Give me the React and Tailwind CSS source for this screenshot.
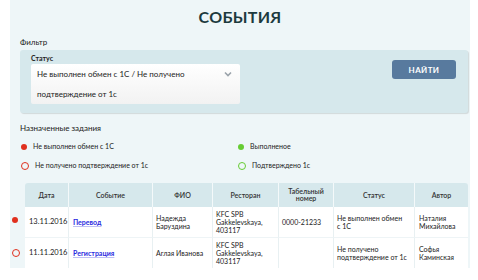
import React from "react";

const cols = "grid-cols-[15px_43px_84px_60px_66px_55px_81px_54px]";

const rows = [
  {
    dot: "fill",
    date: "13.11.2016",
    event: "Перевод",
    fio: ["Надежда", "Баруздина"],
    rest: ["KFC SPB", "Gakkelevskaya,", "403117"],
    num: "0000-21233",
    status: ["Не выполнен обмен", "с 1С"],
    author: ["Наталия", "Михайлова"],
  },
  {
    dot: "ring",
    date: "11.11.2016",
    event: "Регистрация",
    fio: ["Аглая Иванова"],
    rest: ["KFC SPB", "Gakkelevskaya,", "403117"],
    num: "",
    status: ["Не получено", "подтверждение от 1с"],
    author: ["Софья", "Каминская"],
  },
];

function Dot({ kind, color }) {
  if (kind === "fill") {
    return <span className={`block w-[6px] h-[6px] rounded-full ${color === "red" ? "bg-[#e0301e]" : "bg-[#66cc33]"}`} />;
  }
  return (
    <span
      className={`block w-[8px] h-[8px] rounded-full border-[1.5px] ${color === "red" ? "border-[#e0301e]" : "border-[#66cc33]"}`}
    />
  );
}

function Lines({ items }) {
  return (
    <div className="leading-[8px]">
      {items.map((t) => (
        <div key={t}>{t}</div>
      ))}
    </div>
  );
}

export default function App() {
  return (
    <div className="w-[478px] h-[280px] bg-white overflow-hidden" style={{ fontFamily: "Lato, 'Open Sans', sans-serif" }}>
      <div className="ml-[10px] w-[460px] h-[268px] bg-[#eef6f8] overflow-hidden text-[#222]">
        <h1 className="h-[34px] flex items-center justify-center text-[16px] font-bold text-[#1d3a3e] tracking-[0.3px]">
          СОБЫТИЯ
        </h1>

        <div className="pl-[10px] text-[8px] leading-[14px] h-[16px] pt-[1px]">Фильтр</div>

        <div className="ml-[10px] w-[448px] h-[63px] bg-[#d6e8ec] rounded-[3px] shadow-[1px_1px_1px_rgba(0,0,0,0.12)] flex justify-between px-[11px] pt-[4px]">
          <div>
            <div className="text-[7px] font-bold leading-[9px]">Статус</div>
            <div className="mt-[1px] w-[209px] h-[40px] bg-gradient-to-b from-white to-[#f2f2f2] rounded-[2px] flex justify-between pl-[6px] pr-[8px] text-[8px]">
              <div className="leading-[20px]">
                <div>Не выполнен обмен с 1С / Не получено</div>
                <div>подтверждение от 1с</div>
              </div>
              <svg width="8" height="6" viewBox="0 0 8 6" className="mt-[7px]">
                <path d="M1 1.5 L4 4.5 L7 1.5" fill="none" stroke="#9aa3aa" strokeWidth="1.6" />
              </svg>
            </div>
          </div>
          <button className="mt-[6px] mr-[1px] w-[64px] h-[19px] rounded-[3px] bg-[#587a9e] text-white text-[8px] font-bold tracking-[0.4px]">
            НАЙТИ
          </button>
        </div>

        <div className="pl-[10px] mt-[9px] text-[8px] leading-[12px]">Назначенные задания</div>

        <div className="mt-[3px] grid grid-cols-[221px_200px] text-[7px] leading-[19px]">
          <div className="flex items-center pl-[11px] gap-[6px]">
            <Dot kind="fill" color="red" />
            <span>Не выполнен обмен с 1С</span>
          </div>
          <div className="flex items-center pl-[7px] gap-[6px]">
            <Dot kind="fill" color="green" />
            <span>Выполненое</span>
          </div>
          <div className="flex items-center pl-[11px] gap-[6px]">
            <Dot kind="ring" color="red" />
            <span>Не получено подтверждение от 1с</span>
          </div>
          <div className="flex items-center pl-[7px] gap-[6px]">
            <Dot kind="ring" color="green" />
            <span>Подтверждено 1с</span>
          </div>
        </div>

        <div className={`mt-[8px] grid ${cols} text-[7px]`}>
          <div />
          {["Дата", "Событие", "ФИО", "Ресторан"].map((h, i) => (
            <div
              key={h}
              className={`h-[24px] bg-[#d6e8ec] flex items-center justify-center font-semibold text-[#333] ${i > 0 ? "border-l border-[#f4f9fa]" : "rounded-tl-[3px]"}`}
            >
              {h}
            </div>
          ))}
          <div className="h-[24px] bg-[#d6e8ec] border-l border-[#f4f9fa] flex items-center justify-center text-center font-semibold text-[#333] leading-[7px]">
            Табельный
            <br />
            номер
          </div>
          {["Статус", "Автор"].map((h, i) => (
            <div
              key={h}
              className={`h-[24px] bg-[#d6e8ec] border-l border-[#f4f9fa] flex items-center justify-center font-semibold text-[#333] ${i === 1 ? "rounded-tr-[3px]" : ""}`}
            >
              {h}
            </div>
          ))}

          {rows.map((r, idx) => (
            <React.Fragment key={r.date}>
              <div className={`flex items-center pl-[2px] ${idx === 0 ? "h-[30px] pb-[5px]" : "h-[31px]"}`}>
                <Dot kind={r.dot} color="red" />
              </div>
              <div className={`bg-white flex items-center pl-[4px] text-[7.5px] ${idx === 0 ? "" : "border-t border-[#eef4f6]"}`}>
                {r.date}
              </div>
              <div className={`bg-white border-l border-[#e8f0f2] flex items-center pl-[4px] ${idx === 0 ? "" : "border-t border-t-[#eef4f6]"}`}>
                <span className="text-[#2a2ae0] font-bold underline decoration-[#c0c0f4]">{r.event}</span>
              </div>
              <div className={`bg-white border-l border-[#e8f0f2] flex items-center pl-[3px] ${idx === 0 ? "" : "border-t border-t-[#eef4f6]"}`}>
                <Lines items={r.fio} />
              </div>
              <div className={`bg-white border-l border-[#e8f0f2] flex items-center pl-[3px] ${idx === 0 ? "" : "border-t border-t-[#eef4f6]"}`}>
                <Lines items={r.rest} />
              </div>
              <div className={`bg-white border-l border-[#e8f0f2] flex items-center pl-[3px] ${idx === 0 ? "" : "border-t border-t-[#eef4f6]"}`}>
                {r.num}
              </div>
              <div className={`bg-white border-l border-[#e8f0f2] flex items-center pl-[3px] ${idx === 0 ? "" : "border-t border-t-[#eef4f6]"}`}>
                <Lines items={r.status} />
              </div>
              <div className={`bg-white border-l border-[#e8f0f2] flex items-center pl-[4px] ${idx === 0 ? "" : "border-t border-t-[#eef4f6]"}`}>
                <Lines items={r.author} />
              </div>
            </React.Fragment>
          ))}
        </div>
      </div>
    </div>
  );
}
